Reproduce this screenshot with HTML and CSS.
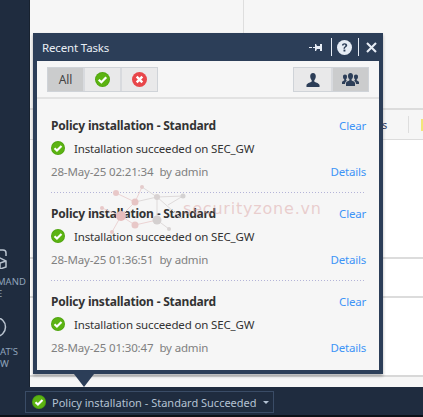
FILE: index.html
```html
<!DOCTYPE html>
<html lang="en">
<head>
    <meta charset="UTF-8">
    <title>Recent Tasks</title>
    <link rel="stylesheet" href="styles.css">
</head>
<body>
    <svg class="defs" width="0" height="0">
        <symbol id="ok" viewBox="0 0 16 16">
            <circle cx="8" cy="8" r="8" fill="#4fa50f"/>
            <circle cx="8" cy="8" r="7" fill="#5cb312"/>
            <path d="M4 8.200l2.800 2.700L12 5.600" fill="none" stroke="#fff" stroke-width="2.400"/>
        </symbol>
    </svg>

    <div class="app">
        <div class="sidebar">
            <div class="side-item">
                <svg class="side-icon" width="8" height="20" viewBox="0 0 8 20"><path d="M-3 8V1h6a3 3 0 0 1 3 3v3M-4 11l4-2 6 3v6l-6 2M0 14l6-2M0 14v6" fill="none" stroke="#b9c3cf" stroke-width="1.500"/></svg>
                <div class="side-label">MAND<br>E</div>
            </div>
            <div class="side-item side-item-2">
                <svg class="side-icon" width="8" height="20" viewBox="0 0 8 20"><circle cx="-4" cy="9" r="9.500" fill="none" stroke="#b9c3cf" stroke-width="1.500"/></svg>
                <div class="side-label">AT'S<br>W</div>
            </div>
        </div>
        <div class="main">
            <div class="top-panel">
                <div class="top-left"></div>
                <div class="top-right"></div>
            </div>
            <div class="tab-strip"><span class="tab-text">s</span><span class="tab-divider"></span><span class="tab-mark"></span></div>
            <div class="table-area">
                <div class="table-row row-a"></div>
                <div class="table-row row-b"></div>
                <div class="table-row row-c"></div>
            </div>
            <div class="table-foot"></div>
        </div>
    </div>

    <div class="statusbar">
        <div class="status-task">
            <svg class="icon"><use href="#ok"/></svg>
            <span>Policy installation - Standard Succeeded</span>
            <i class="caret"></i>
        </div>
    </div>
    <div class="status-end"></div>

    <div class="popup">
        <div class="popup-title">
            <span class="popup-name">Recent Tasks</span>
            <div class="title-tools">
                <svg class="tool-pin" width="13" height="7" viewBox="0 0 13 7"><path d="M0 3h3v1H0zM4 3h2V0h1l1 2h3V0h2v7h-2V5H8L7 7H6V4H4z" fill="#e6ecf5"/></svg>
                <svg class="tool-help" width="15" height="15" viewBox="0 0 15 15"><circle cx="7.500" cy="7.500" r="7.500" fill="#e6ecf5"/><path d="M4.900 5.600c.1-1.600 1.200-2.400 2.700-2.400s2.600.8 2.600 2.100c0 1-.6 1.500-1.300 2-.6.400-.9.700-.9 1.500H6.500c0-1.300.4-1.900 1.200-2.400.5-.4.700-.6.700-1 0-.5-.3-.8-.9-.8s-.9.4-1 1z" fill="#2c3e58"/><rect x="6.500" y="9.600" width="1.900" height="1.900" fill="#2c3e58"/></svg>
                <svg class="tool-close" width="11" height="11" viewBox="0 0 11 11"><path d="M1 1l9 9M10 1l-9 9" stroke="#e6ecf5" stroke-width="2.100"/></svg>
            </div>
        </div>
        <div class="popup-body">
            <div class="toolbar">
                <div class="btn-group">
                    <div class="seg seg-all active">All</div>
                    <div class="seg seg-icon"><svg class="icon-btn"><use href="#ok"/></svg></div>
                    <div class="seg seg-icon">
                        <svg class="icon-btn" viewBox="0 0 16 16"><circle cx="8" cy="8" r="8" fill="#e8464a"/><path d="M5 5l6 6M11 5l-6 6" stroke="#fff" stroke-width="2.600"/></svg>
                    </div>
                </div>
                <div class="btn-group">
                    <div class="seg seg-user">
                        <svg width="14" height="14" viewBox="0 0 14 15"><path d="M7 0c2 0 3 1.500 3 3.600 0 2-.8 3.400-1.600 4.100v1.300c0 .7 5.600 1.800 5.600 4V15H0v-2c0-2.200 5.600-3.300 5.600-4V7.700C4.800 7 4 5.600 4 3.600 4 1.500 5 0 7 0z" fill="#2c3e58"/></svg>
                    </div>
                    <div class="seg seg-user active">
                        <svg width="17" height="13" viewBox="0 0 17 13"><path d="M3 1.500c1.300 0 2 .9 2 2.300S4.400 6 4 6.400v.8l1.300.6C3.800 8.500 3 9.500 3 11H0V9.200c0-1.200 2.300-1.500 2.300-2v-.8C1.600 6 1 5.200 1 3.800s.7-2.300 2-2.300zM14 1.500c1.300 0 2 .9 2 2.300s-.6 2.200-1.300 2.600v.8c0 .5 2.300.8 2.300 2V11h-3c0-1.500-.8-2.500-2.300-3.200L13 7.200v-.8c-.4-.4-1-1.200-1-2.600s.7-2.300 2-2.300z" fill="#2c3e58"/><path d="M8.500 0C10 0 11 1.100 11 2.900c0 1.500-.6 2.700-1.400 3.200v1.200c0 .6 3.400 1 3.400 3V13H4v-2.700c0-2 3.400-2.400 3.400-3V6.100C6.600 5.600 6 4.400 6 2.900 6 1.100 7 0 8.500 0z" fill="#2c3e58"/></svg>
                    </div>
                </div>
            </div>

            <div class="task-list">
                <div class="task">
                    <div class="task-line">
                        <span class="task-title">Policy installation - Standard</span>
                        <a class="task-link">Clear</a>
                    </div>
                    <div class="task-status">
                        <svg class="icon"><use href="#ok"/></svg>
                        <span>Installation succeeded on SEC_GW</span>
                    </div>
                    <div class="task-line">
                        <span class="task-meta"><span class="task-date">28-May-25 02:21:34</span>by admin</span>
                        <a class="task-link">Details</a>
                    </div>
                </div>
                <div class="task">
                    <div class="task-line">
                        <span class="task-title">Policy installation - Standard</span>
                        <a class="task-link">Clear</a>
                    </div>
                    <div class="task-status">
                        <svg class="icon"><use href="#ok"/></svg>
                        <span>Installation succeeded on SEC_GW</span>
                    </div>
                    <div class="task-line">
                        <span class="task-meta"><span class="task-date">28-May-25 01:36:51</span>by admin</span>
                        <a class="task-link">Details</a>
                    </div>
                </div>
                <div class="task">
                    <div class="task-line">
                        <span class="task-title">Policy installation - Standard</span>
                        <a class="task-link">Clear</a>
                    </div>
                    <div class="task-status">
                        <svg class="icon"><use href="#ok"/></svg>
                        <span>Installation succeeded on SEC_GW</span>
                    </div>
                    <div class="task-line">
                        <span class="task-meta"><span class="task-date">28-May-25 01:30:47</span>by admin</span>
                        <a class="task-link">Details</a>
                    </div>
                </div>
            </div>
        </div>
    </div>
    <div class="popup-arrow"></div>

    <!-- watermark over the popup -->
    <div class="watermark">
        <svg width="90" height="50" viewBox="0 0 90 50">
            <path class="wm-pink" d="M42 2L35 17L16 8M35 17L21 31L2 23M21 31L12 47M21 31L35 40L57 35" />
            <path class="wm-grey" d="M42 2L57 12L83 11M35 17L57 12L57 35L69 44M57 12L82 34M83 11L68 20" />
            <circle cx="16" cy="8" r="3" fill="#e8c8c8"/>
            <circle cx="35" cy="17" r="3.500" fill="#e6c4c4"/>
            <circle cx="42" cy="2" r="2" fill="#e4cccc"/>
            <circle cx="57" cy="12" r="3" fill="#d8d2d2"/>
            <circle cx="83" cy="11" r="2.500" fill="#d4d2d2"/>
            <circle cx="2" cy="23" r="2" fill="#e8c8c8"/>
            <circle cx="21" cy="31" r="5" fill="#e6bcbc"/>
            <circle cx="35" cy="40" r="3.500" fill="#e8c8c8"/>
            <circle cx="57" cy="35" r="4.500" fill="#d4d0d0"/>
            <circle cx="69" cy="44" r="2" fill="#d8d4d4"/>
            <circle cx="12" cy="47" r="2" fill="#e8c8c8"/>
        </svg>
        <span class="watermark-text">securityzone.vn</span>
    </div>
</body>
</html>
```

FILE: styles.css
```css
* {
    box-sizing: border-box;
}
html, body {
    margin: 0;
    height: 100%;
    overflow: hidden;
}
body {
    font-family: "Noto Sans", Arial, sans-serif;
    font-size: 11.5px;
    letter-spacing: -0.15px;
    color: #333;
    background: #000;
    position: relative;
}
.defs {
    position: absolute;
}
.app {
    display: flex;
    height: 387px;
}
.sidebar {
    width: 31px;
    background: #1f2c3f;
    padding-top: 249px;
    overflow: hidden;
    border-right: 1px solid #18222f;
}
.side-item {
    height: 69px;
}
.side-icon {
    display: block;
    overflow: hidden;
}
.side-label {
    font-size: 9.5px;
    letter-spacing: 0;
    line-height: 12px;
    color: #8fa3ba;
    white-space: nowrap;
    margin-left: -3px;
    margin-top: 7px;
}
.side-item-2 .side-label {
    margin-left: 0;
    margin-top: 8px;
}
.main {
    flex: 1;
    background: #f6f6f6;
    display: flex;
    flex-direction: column;
}
.top-panel {
    height: 110px;
    display: flex;
    border-bottom: 2px solid #dcdcdc;
}
.top-left {
    width: 214px;
    border-right: 1px solid #dedede;
}
.tab-strip {
    height: 30px;
    background: #f6f6f6;
    border-bottom: 1px solid #dcdcdc;
    display: flex;
    align-items: center;
    padding-left: 352px;
    overflow: hidden;
}
.tab-text {
    font-size: 11px;
    width: 26px;
    color: #2f3f68;
}
.tab-divider {
    width: 1px;
    height: 17px;
    background: #dedede;
    margin-right: 12px;
}
.tab-mark {
    width: 2px;
    height: 12px;
    background: #f2e67a;
}
.table-area {
    height: 237px;
    background: #fff;
}
.table-row {
    border-bottom: 2px solid #dcdcdc;
}
.row-a {
    height: 119px;
}
.row-b {
    height: 39px;
}
.row-c {
    height: 79px;
    border-bottom-color: #d8d8d8;
}
.table-foot {
    flex: 1;
    background: #f6f6f6;
}

/* bottom bar */
.statusbar {
    height: 28px;
    background: #1f2c3f;
    padding: 4px 0 0 25px;
}
.status-end {
    height: 2px;
    background: #0c1118;
}
.status-task {
    width: 249px;
    height: 22px;
    border: 1px solid #3a4c66;
    display: flex;
    align-items: center;
    padding-left: 6px;
    color: #b4c2d3;
    font-size: 11px;
    letter-spacing: 0;
    white-space: nowrap;
}
.status-task span {
    margin-left: 6px;
    width: 208px;
}
.caret {
    border: 3px solid transparent;
    border-top-color: #b4c2d3;
    border-bottom-width: 0;
    margin-left: 3px;
}
.icon {
    width: 14px;
    height: 14px;
    flex: none;
}

/* recent tasks popup */
.popup {
    position: absolute;
    left: 33px;
    top: 33px;
    width: 350px;
    height: 341px;
    background: #2c3e58;
    padding: 0 4px 4px;
    box-shadow: 0 2px 3px rgba(0, 0, 0, 0.3);
}
.popup-arrow {
    position: absolute;
    left: 74px;
    top: 374px;
    border: 10px solid transparent;
    border-top: 13px solid #2c3e58;
    border-bottom-width: 0;
}
.popup-title {
    height: 28px;
    display: flex;
    align-items: center;
    justify-content: space-between;
    color: #e9eef5;
    padding-left: 5px;
}
.title-tools {
    display: flex;
    align-items: center;
    height: 18px;
}
.tool-pin {
    margin-right: 9px;
}
.tool-help {
    box-sizing: content-box;
    height: 15px;
    border-left: 1px solid #e6ecf5;
    border-right: 1px solid #e6ecf5;
    padding: 2px 6px 1px 5px;
}
.tool-close {
    margin: 0 2px 0 7px;
}
.popup-body {
    height: 309px;
    background: #f6f6f6;
}
.toolbar {
    height: 38px;
    border-bottom: 2px solid #e2e2e2;
    display: flex;
    justify-content: space-between;
    padding: 6px 10px 0;
}
.btn-group {
    display: flex;
    height: 25px;
    border: 1px solid #cfd3d8;
    background: #e9e9ea;
}
.seg {
    display: flex;
    align-items: center;
    justify-content: center;
    border-left: 2px solid #d8dade;
}
.seg:first-child {
    border-left: none;
}
.seg.active {
    background: #cbcccd;
}
.seg-all {
    width: 35px;
    color: #444;
    font-size: 12px;
}
.seg-icon {
    width: 37px;
}
.seg-user {
    width: 37px;
}
.icon-btn {
    width: 15px;
    height: 15px;
}
.task-list {
    padding: 6px 13px 0 14px;
}
.task {
    height: 88px;
    padding-top: 11px;
    background: linear-gradient(to right, #b4b4d8 1px, transparent 1px) left bottom / 3px 1px repeat-x;
}
.task:last-child {
    background: none;
}
.task-line {
    display: flex;
    justify-content: space-between;
    align-items: center;
    height: 18px;
}
.task-title {
    font-size: 12px;
    font-weight: 700;
    letter-spacing: -0.2px;
    color: #333;
}
.task-status {
    display: flex;
    align-items: center;
    height: 18px;
    margin: 5px 0;
}
.task-status span {
    margin-left: 9px;
}
.task-meta {
    color: #808080;
}
.task-date {
    margin-right: 6px;
}
.task-link {
    color: #3d94f6;
    letter-spacing: -0.2px;
}

/* watermark */
.watermark {
    position: absolute;
    left: 100px;
    top: 185px;
    display: flex;
    align-items: center;
    pointer-events: none;
}
.wm-pink,
.wm-grey {
    fill: none;
    stroke-width: 1;
}
.wm-pink {
    stroke: #ecd4d4;
}
.wm-grey {
    stroke: #dedada;
}
.watermark-text {
    font-family: "DejaVu Sans", sans-serif;
    font-size: 16px;
    letter-spacing: 0.8px;
    color: rgba(220, 165, 165, 0.5);
    margin: 0 0 4px -7px;
}
```
